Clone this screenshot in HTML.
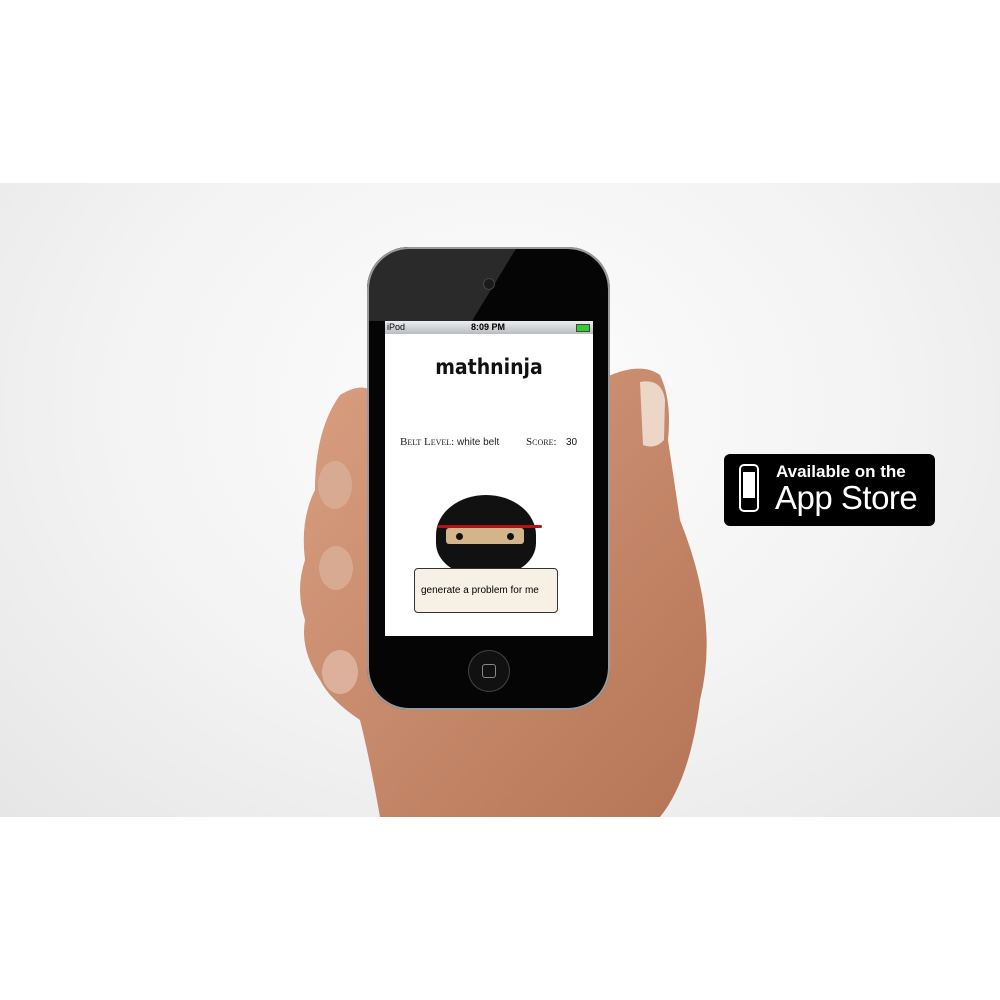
<!DOCTYPE html>
<html><head><style>
body{margin:0;width:1000px;height:1000px;background:#fff;position:relative;overflow:hidden;font-family:"Liberation Sans",sans-serif}
.bg{position:absolute;left:0;top:183px;width:1000px;height:634px;background:radial-gradient(ellipse at 50% 35%,#fdfdfd 0%,#f3f3f3 55%,#e6e6e6 100%)}
.abs{position:absolute}
</style></head><body>
<div class="bg"></div>
<svg class="abs" style="left:0;top:0" width="1000" height="1000">
<defs><linearGradient id="h" x1="0" y1="0" x2="1" y2="1"><stop offset="0" stop-color="#d99e80"/><stop offset="1" stop-color="#b57456"/></linearGradient></defs>
<path d="M600 380 Q640 360 660 375 Q672 400 668 440 L680 520 Q720 620 700 700 Q690 780 660 817 L380 817 Q370 760 360 720 Q330 700 320 680 Q300 650 305 620 Q295 590 305 560 Q300 520 315 490 Q315 430 340 395 Q365 380 375 395 L600 395 Z" fill="url(#h)"/>
<path d="M640 382 Q662 378 665 400 L664 440 Q655 450 643 445 Z" fill="#ebd6c8"/>
<ellipse cx="340" cy="672" rx="18" ry="22" fill="#dcb09a"/>
<ellipse cx="336" cy="568" rx="17" ry="22" fill="#d9aa92"/>
<ellipse cx="335" cy="485" rx="17" ry="24" fill="#d9aa92"/>
</svg>
<div class="abs" style="left:367px;top:247px;width:243px;height:463px;border-radius:42px;background:#050505;box-shadow:inset 0 0 0 2px #999;overflow:hidden">
<svg class="abs" style="left:0;top:0" width="243" height="80"><path d="M0 0 L150 0 L105 74 L0 74Z" fill="#2a2a2a"/></svg>
<div class="abs" style="left:0;top:0;width:243px;height:463px;border-radius:42px;box-shadow:inset 0 0 0 2px #999"></div>
</div>
<div class="abs" style="left:484px;top:279px;width:10px;height:10px;border-radius:50%;background:#1a1a1a;box-shadow:0 0 0 1px #444"></div>
<div class="abs" style="left:385px;top:321px;width:208px;height:315px;background:#fff"></div>
<div class="abs" style="left:385px;top:321px;width:208px;height:13px;background:linear-gradient(#eceef0,#b8bcc0);font-size:9px;line-height:13px">
<span class="abs" style="left:2px">iPod</span><span class="abs" style="left:86px;font-weight:bold">8:09 PM</span>
<span class="abs" style="left:191px;top:3px;width:12px;height:6px;background:#3c3;border:1px solid #444"></span></div>
<div class="abs" style="left:385px;top:355px;width:208px;text-align:center;font-size:21px;font-weight:bold;font-family:'DejaVu Sans Condensed','DejaVu Sans',sans-serif;color:#111">mathninja</div>
<div class="abs" style="left:400px;top:436px;font-size:11px;font-family:'Liberation Serif',serif;color:#222;font-variant:small-caps">Belt Level: <span style="font-family:'Liberation Sans';font-size:10px;font-variant:normal">white belt</span></div>
<div class="abs" style="left:526px;top:436px;font-size:11px;font-family:'Liberation Serif',serif;color:#222;font-variant:small-caps">Score:</div>
<div class="abs" style="left:566px;top:437px;font-size:10px;color:#111">30</div>
<div class="abs" style="left:436px;top:495px;width:100px;height:80px;border-radius:50% 50% 40% 40%;background:#111"></div>
<div class="abs" style="left:446px;top:528px;width:78px;height:16px;background:#d4b48a;border-radius:3px"></div>
<div class="abs" style="left:456px;top:533px;width:7px;height:7px;border-radius:50%;background:#111"></div>
<div class="abs" style="left:507px;top:533px;width:7px;height:7px;border-radius:50%;background:#111"></div>
<div class="abs" style="left:437px;top:525px;width:105px;height:3px;background:#b11;border-radius:2px"></div>
<div class="abs" style="left:414px;top:568px;width:144px;height:45px;border:1.5px solid #333;border-radius:4px;background:#f6f1e4;font-size:10px;line-height:44px;padding-left:6px;box-sizing:border-box">generate a problem for me</div>
<div class="abs" style="left:468px;top:650px;width:42px;height:42px;border-radius:50%;background:#111;box-shadow:inset 0 0 0 1px #444"></div>
<div class="abs" style="left:482px;top:664px;width:12px;height:12px;border:1.5px solid #888;border-radius:3px"></div>
<div class="abs" style="left:724px;top:454px;width:211px;height:72px;background:#000;border-radius:6px;color:#fff">
<div class="abs" style="left:15px;top:10px;width:20px;height:48px;border:2px solid #fff;border-radius:5px;box-sizing:border-box"></div>
<div class="abs" style="left:19px;top:18px;width:12px;height:26px;background:#fff"></div>
<div class="abs" style="left:52px;top:8px;font-size:17px;font-weight:bold">Available on the</div>
<div class="abs" style="left:51px;top:25px;font-size:33px;letter-spacing:-0.5px">App Store</div>
</div>
</body></html>
